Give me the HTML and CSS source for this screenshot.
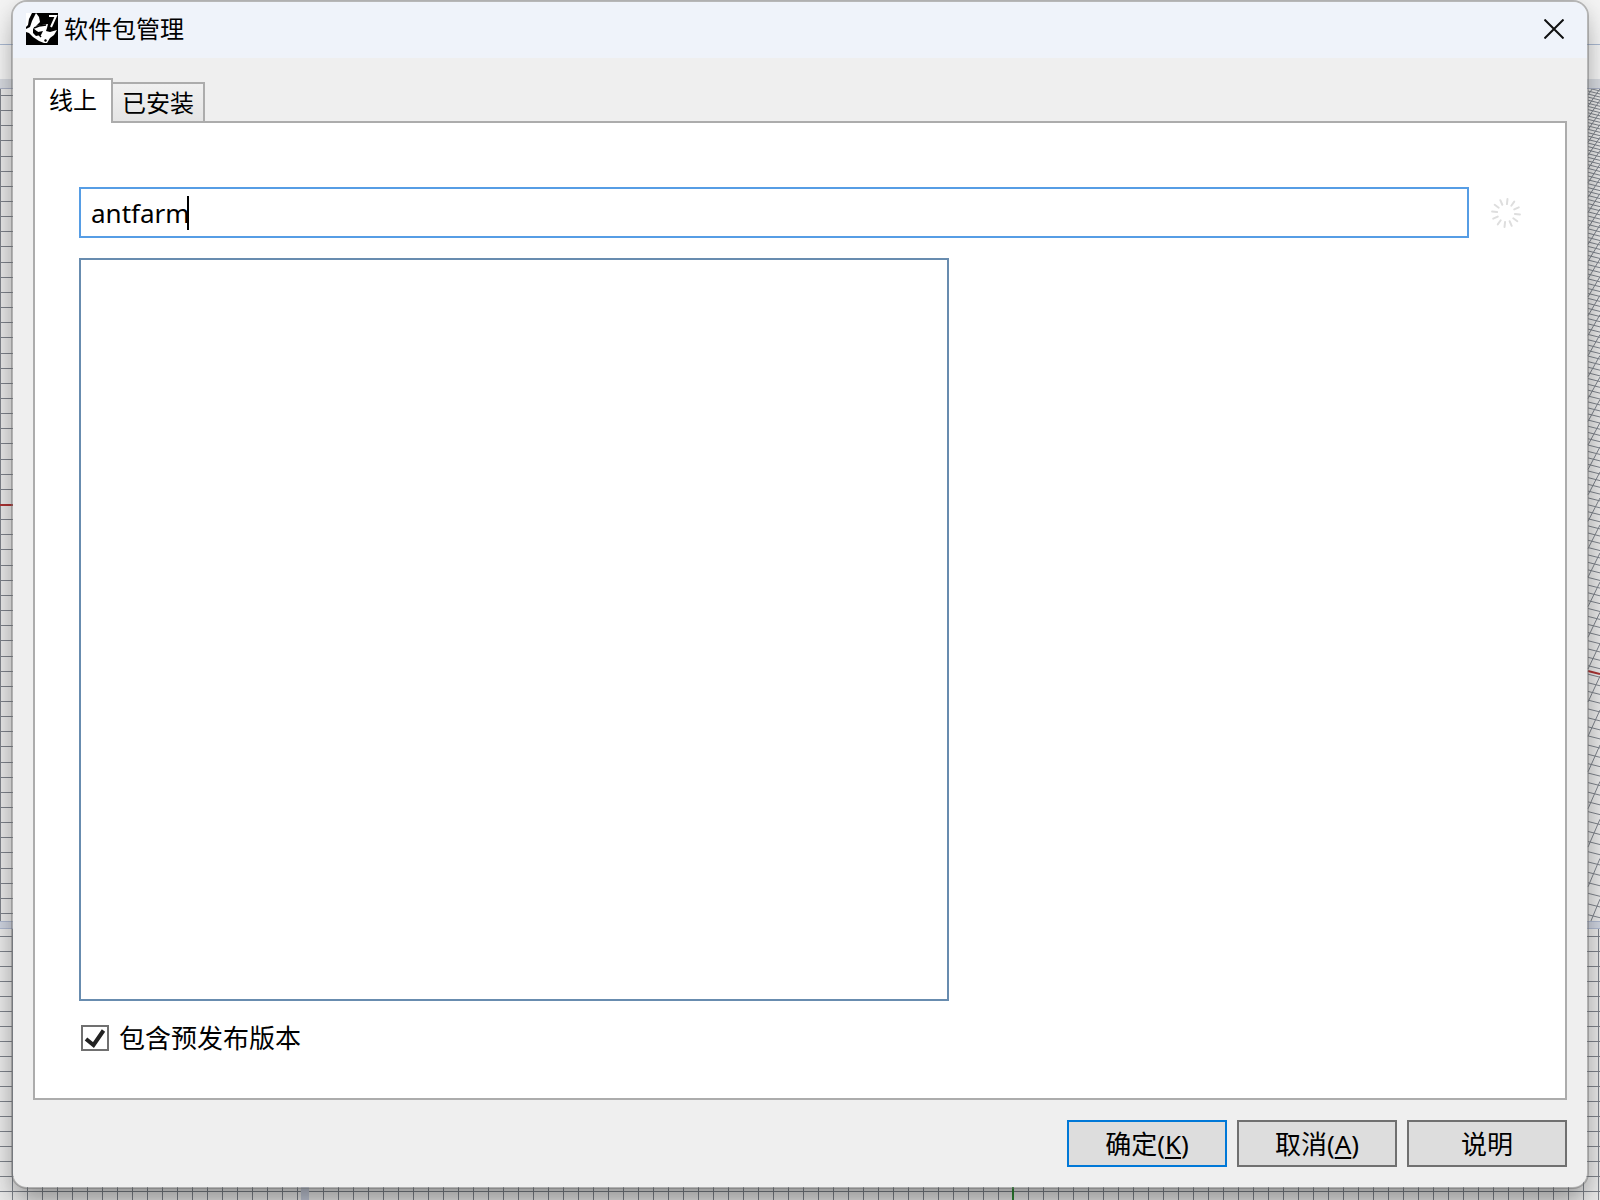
FILE: index.html
```
<!DOCTYPE html>
<html lang="zh-CN">

<head>
    <meta charset="UTF-8">
    <meta name="viewport" content="width=device-width, initial-scale=1.0">
    <title>软件包管理</title>
    <link rel="stylesheet" href="styles.css">
</head>

<body>
    <svg class="viewports" id="viewports" viewBox="0 0 1600 1200" preserveAspectRatio="none" aria-hidden="true"></svg>

    <main class="dialog">
        <header class="titlebar">
            <svg class="logo" viewBox="0 0 32 32" aria-hidden="true">
                <rect width="32" height="32" fill="#000"/>
                <path d="M0 0H6L3 6L2 12L0 14Z" fill="#fff"/>
                <path d="M10 0L13 4L14 9L10 13L16 12L22 11L21 15L20 18L24 19L31 17L28 22L24 25L21 30L18 30L13 28L7 24L3 20L0 19V16L4 14L6 8Z" fill="#fff"/>
                <path d="M7 15L12 19L17 18L15 22L10 23L7 20ZM18 27L20 26L21 28L19 29Z" fill="#000"/>
                <path d="M8 15L13 13L20 12M11 19L15 24" stroke="#000" stroke-width="1.500" fill="none"/>
                <path d="M23 3H30L25 14" stroke="#fff" stroke-width="2" fill="none"/>
            </svg>
            <h1>软件包管理</h1>
            <button type="button" class="close" aria-label="关闭">
                <svg viewBox="0 0 20 20"><path d="M0.500 0.500L19.500 19.500M19.500 0.500L0.500 19.500" stroke="#111" stroke-width="2" fill="none"/></svg>
            </button>
        </header>

        <div class="content">
            <div class="tabs" role="tablist">
                <button type="button" class="tab active" role="tab" aria-selected="true">线上</button>
                <button type="button" class="tab" role="tab" aria-selected="false">已安装</button>
            </div>

            <section class="panel">
                <div class="search-row">
                    <div class="search-box">
                        <input type="text" class="search" aria-label="搜索" value="antfarm">
                        <span class="caret"></span>
                    </div>
                    <svg class="spinner" id="spinner" viewBox="-15 -15 30 30" aria-hidden="true"></svg>
                </div>
                <div class="package-list"></div>
                <label class="prerelease" for="prerelease">
                    <span class="check">
                        <input type="checkbox" id="prerelease" checked>
                        <svg viewBox="0 0 28 26"><path d="M5 14L12.500 20L22.500 5.500" stroke="#222" stroke-width="4" fill="none"/></svg>
                    </span>
                    包含预发布版本
                </label>
            </section>

            <footer class="buttons">
                <button type="button" class="btn default">确定(<u>K</u>)</button>
                <button type="button" class="btn">取消(<u>A</u>)</button>
                <button type="button" class="btn">说明</button>
            </footer>
        </div>
    </main>
    <script src="script.js"></script>
</body>

</html>
```

FILE: styles.css
```
* {
    box-sizing: border-box;
}

body {
    margin: 0;
    height: 100vh;
    display: flex;
    padding: 0 11px 11px;
    background: #e9e9e9;
    color: #000;
    font-family: "Noto Sans", "Noto Sans CJK SC", sans-serif;
    overflow: hidden;
}

button, input {
    font: inherit;
    color: inherit;
    margin: 0;
}

.viewports {
    position: absolute;
    inset: 0;
    width: 100%;
    height: 100%;
    z-index: -1;
}

.dialog {
    flex: 1;
    display: flex;
    flex-direction: column;
    border: 2px solid rgba(110, 110, 110, 0.45);
    border-radius: 16px;
    background: #efefef;
    background-clip: padding-box;
    box-shadow: 0 20px 28px -6px rgba(0, 0, 0, 0.3), 0 4px 20px rgba(0, 0, 0, 0.12);
}

.titlebar {
    display: flex;
    align-items: center;
    height: 56px;
    padding: 0 23px 2px 13px;
    border-radius: 14px 14px 0 0;
    background: #eff3fa;
}

.logo {
    width: 32px;
    height: 32px;
}

h1 {
    flex: 1;
    margin: 0 0 0 6px;
    font-size: 24px;
    line-height: 32px;
    font-weight: 400;
}

.close {
    padding: 0;
    border: 0;
    background: none;
    height: 20px;
}

.close svg {
    display: block;
    width: 20px;
    height: 20px;
}

.content {
    flex: 1;
    display: flex;
    flex-direction: column;
    padding: 20px;
}

.tabs {
    display: flex;
    align-items: flex-end;
    height: 45px;
    margin-bottom: -2px;
}

.tab {
    height: 41px;
    padding: 0 9px;
    border: 2px solid #acacac;
    border-left: 0;
    background: linear-gradient(#f0f0f0, #e5e5e5);
    font-size: 24px;
    line-height: 36px;
}

.tab.active {
    height: 45px;
    padding: 0 14px 4px;
    border-left: 2px solid #acacac;
    border-bottom: 0;
    background: #fff;
    position: relative;
}

.panel {
    flex: 1;
    display: flex;
    flex-direction: column;
    padding: 64px 44px 44px;
    border: 2px solid #acacac;
    background: #fff;
}

.search-row {
    display: flex;
    align-items: center;
    gap: 22px;
}

.search-box {
    flex: 1;
    position: relative;
}

.search {
    display: block;
    width: 100%;
    height: 51px;
    padding: 0 10px;
    border: 2px solid #569de5;
    outline: 0;
    background: #fff;
    font-size: 26px;
}

.caret {
    position: absolute;
    left: 108px;
    top: 9px;
    width: 2px;
    height: 34px;
    background: #000;
}

.spinner {
    width: 30px;
    height: 30px;
}

.package-list {
    flex: 1;
    width: 60.33%;
    margin-top: 20px;
    border: 2px solid #688caf;
}

.prerelease {
    display: flex;
    align-items: center;
    gap: 10px;
    height: 32px;
    margin-top: 21px;
    padding-left: 2px;
    font-size: 26px;
    line-height: 32px;
}

.check {
    position: relative;
    width: 28px;
    height: 26px;
}

.check input {
    display: block;
    appearance: none;
    width: 28px;
    height: 26px;
    border: 2px solid #707070;
    background: #fff;
}

.check svg {
    position: absolute;
    inset: 0;
    pointer-events: none;
}

.buttons {
    display: flex;
    justify-content: flex-end;
    gap: 10px;
    margin-top: 20px;
}

.btn {
    width: 160px;
    height: 47px;
    padding: 0;
    border: 2px solid #707070;
    background: #ddd;
    font-size: 26px;
    line-height: 40px;
}

.btn.default {
    border-color: #0078d7;
}

.btn u {
    text-underline-offset: 3px;
}
```

FILE: script.js
```
const viewports = document.getElementById('viewports');
const grid = '#7d828a';
let shapes = '';

function rect(x, y, w, h, fill) {
    shapes += `<rect x="${x}" y="${y}" width="${w}" height="${h}" fill="${fill}"/>`;
}

function line(x1, y1, x2, y2, color, width) {
    shapes += `<path d="M${x1} ${y1}L${x2} ${y2}" stroke="${color}" stroke-width="${width}"/>`;
}

// toolbar edge and viewport title strip
rect(0, 0, 1600, 79, '#f3f3f3');
rect(0, 44, 1600, 1, '#a9b8d0');
rect(0, 79, 1600, 9, '#d6d9df');
rect(0, 88, 1600, 1, '#a9b0c4');

// flat grids on the left and along the bottom
for (let i = -27; i < 28; i++) {
    if (i !== 0) rect(0, Math.round(504 + i * 15.15), 20, 1, grid);
}
for (let y = 936; y < 1200; y += 15) {
    rect(0, y, 20, 1, grid);
    rect(1580, y, 20, 1, grid);
}
rect(0, 89, 1, 832, grid);
rect(0, 504, 20, 2, '#a33');
rect(0, 1191, 1600, 1, grid);
for (let x = 12; x < 300; x += 15) rect(x, 928, 1, 272, grid);
for (let x = 323; x < 1600; x += 15) rect(x, 1180, 1, 20, grid);
rect(1598, 928, 1, 272, grid);
rect(1012, 1180, 2, 20, '#2f8a35');
rect(301, 1180, 8, 20, '#c3c9d8');

// perspective grid on the right
shapes += '<svg x="1580" y="89" width="20" height="832" viewBox="1580 89 20 832">';
for (let y = 88; y < 925; y += 3 + (y - 88) * 0.0095) line(1588, y, 1600, y + 3, grid, 1);
for (let y = 95; y < 950; y += 11 + (y - 90) * 0.038) line(1588, y, 1600, y - 16 - y * 0.014, grid, 1);
line(1588, 671, 1600, 674, '#a33', 2);
shapes += '</svg>';

// split bar between the upper and lower viewports
rect(0, 921, 1600, 7, '#ced3df');
rect(0, 921, 1600, 1, '#aeb8cf');
rect(0, 928, 1600, 1, '#aeb8cf');
viewports.innerHTML = shapes;

let spokes = '';
for (let i = 0; i < 12; i++) {
    spokes += `<path d="M0 -9V-14" transform="rotate(${i * 30 + 6})" stroke="#dedede" stroke-width="2" stroke-linecap="round"/>`;
}
document.getElementById('spinner').innerHTML = spokes;
```
